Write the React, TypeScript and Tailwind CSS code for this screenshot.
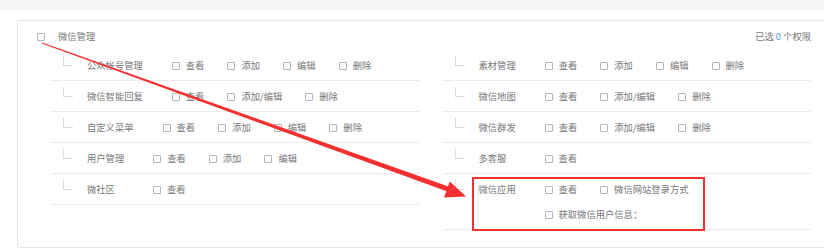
import React from "react";

type Perm = { name: string; items: string[]; wrapAt?: number };

const leftPerms: Perm[] = [
  { name: "公众帐号管理", items: ["查看", "添加", "编辑", "删除"] },
  { name: "微信智能回复", items: ["查看", "添加/编辑", "删除"] },
  { name: "自定义菜单", items: ["查看", "添加", "编辑", "删除"] },
  { name: "用户管理", items: ["查看", "添加", "编辑"] },
  { name: "微社区", items: ["查看"] },
];

const rightPerms: Perm[] = [
  { name: "素材管理", items: ["查看", "添加", "编辑", "删除"] },
  { name: "微信地图", items: ["查看", "添加/编辑", "删除"] },
  { name: "微信群发", items: ["查看", "添加/编辑", "删除"] },
  { name: "多客服", items: ["查看"] },
  { name: "微信应用", items: ["查看", "微信网站登录方式", "获取微信用户信息："], wrapAt: 2 },
];

const Box = () => (
  <span className="inline-block w-[8px] h-[8px] border border-[#b5b5b5] rounded-[1px] bg-white shrink-0" />
);

const PermRow = ({ perm }: { perm: Perm }) => (
  <div className="flex pl-[12px] border-b border-[#ebebeb]">
    <span className="w-[10px] h-[10px] mt-[6px] border-l border-b border-[#dcdcdc] shrink-0" />
    <span className="ml-[14px] min-w-[37px] mr-[29px] leading-[30px] whitespace-nowrap">
      {perm.name}
    </span>
    <div className="flex flex-wrap pt-[3px] pb-[2px]">
      {perm.items.map((item, i) => (
        <React.Fragment key={item}>
          {perm.wrapAt === i && <div className="basis-full h-0" />}
          <label className="flex items-center h-[25px] gap-[6px] mr-[23px] whitespace-nowrap">
            <Box />
            <span>{item}</span>
          </label>
        </React.Fragment>
      ))}
    </div>
  </div>
);

export default function App() {
  return (
    <div
      className="relative w-[824px] h-[251px] overflow-hidden bg-white text-[9.3px] text-[#777]"
      style={{ fontFamily: '"Noto Sans CJK SC", "Noto Sans", sans-serif' }}
    >
      <div className="h-[10px] bg-[#f6f6f6]" />
      <div className="ml-[17px] mt-[10px] w-[814px] h-[228px] border border-[#e6e6e6] rounded-[3px]">
        <div className="flex items-center justify-between h-[29px] pl-[19px] pr-[19px] pt-[2px]">
          <div className="flex items-center gap-[13px]">
            <Box />
            <span>微信管理</span>
          </div>
          <div>
            已选 <span className="text-[#3f9bff]">0</span> 个权限
          </div>
        </div>
        <div className="grid grid-cols-2 gap-x-[23px] pl-[33px] pr-[19px]">
          <div>
            {leftPerms.map((p) => (
              <PermRow key={p.name} perm={p} />
            ))}
          </div>
          <div>
            {rightPerms.map((p) => (
              <PermRow key={p.name} perm={p} />
            ))}
          </div>
        </div>
      </div>

      {/* annotation overlay */}
      <div className="absolute left-[472px] top-[177px] w-[233px] h-[54px] border-2 border-[#f33030]" />
      <svg className="absolute inset-0 pointer-events-none" width="824" height="251">
        <polygon
          points="41.8,43.5 42.2,42.5 448.4,186.6 446.6,191.3"
          fill="#f33030"
        />
        <polygon points="444,197.4 449.8,181.6 466,196.5" fill="#f33030" />
      </svg>
    </div>
  );
}
